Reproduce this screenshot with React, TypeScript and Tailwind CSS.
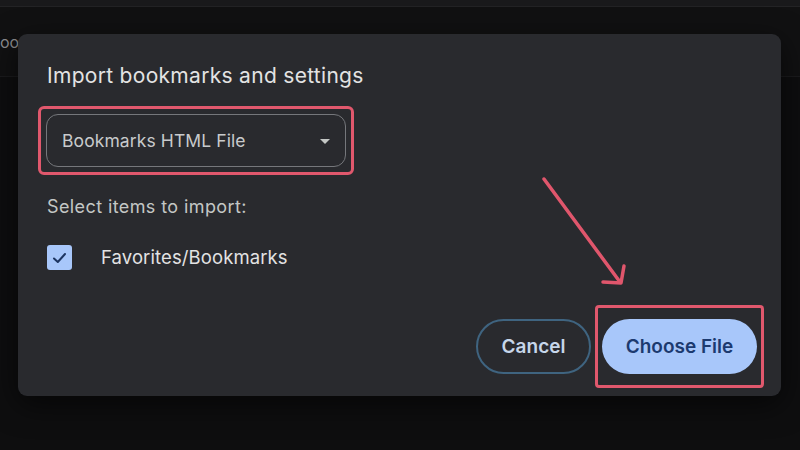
import React from "react";

export default function App() {
  return (
    <div
      className="relative w-[800px] h-[450px] overflow-hidden bg-[#0e0e0f]"
      style={{ fontFamily: "Inter, 'Liberation Sans', sans-serif" }}
    >
      {/* background page */}
      <div className="h-[7px] bg-[#19191b] border-b border-[#232325]" />
      <div className="h-[70px] bg-[#111112] border-b border-[#1b1b1d] flex items-center">
        <span className="ml-0 text-[16px] text-[#8d8d90]">oo</span>
      </div>

      {/* modal dialog */}
      <div className="absolute left-[18px] top-[34px] w-[763px] h-[362px] rounded-[9px] bg-[#292a2e] shadow-[0_8px_30px_rgba(0,0,0,0.6)] pl-[29px] pr-[17px] pt-[29px] flex flex-col">
        <h1 className="text-[21px] leading-[26px] text-[#e3e3e3] font-normal tracking-[0.3px]">
          Import bookmarks and settings
        </h1>

        <div className="mt-[17px] -ml-[9px] w-[316px] border-[3px] border-[#e0586d] rounded-[6px] p-[5px]">
          <div className="h-[53px] rounded-[12px] border border-[#75777b] flex items-center justify-between pl-[15px] pr-[15px] pt-[2px]">
            <span className="text-[17.5px] text-[#c8cacc] tracking-[0.1px]">Bookmarks HTML File</span>
            <svg width="10" height="6" viewBox="0 0 10 6">
              <path d="M0 0 L10 0 L5 5 Z" fill="#c4c7c5" />
            </svg>
          </div>
        </div>

        <div className="mt-[20px] text-[18px] leading-[24px] text-[#c4c7c5] tracking-[0.4px]">
          Select items to import:
        </div>

        <div className="mt-[25px] flex items-center">
          <div className="w-[25px] h-[25px] rounded-[3px] bg-[#a8c7fa] flex items-center justify-center">
            <svg width="15" height="12" viewBox="0 0 15 12">
              <path d="M2 6.5 L5.8 10 L13 2" fill="none" stroke="#1d3561" strokeWidth="2" strokeLinecap="round" strokeLinejoin="round" />
            </svg>
          </div>
          <span className="ml-[29px] text-[18.5px] text-[#e3e3e3] tracking-[0.1px]">Favorites/Bookmarks</span>
        </div>

        <div className="mt-auto mb-[8px] flex items-center justify-end">
          <button className="w-[115px] h-[55px] rounded-full border-2 border-[#3f6480] text-[19px] font-semibold text-[#c6d6ea] flex items-center justify-center pt-[2px]">
            Cancel
          </button>
          <div className="ml-[4px] border-[3px] border-[#e0586d] rounded-[4px] px-[4px] py-[11px]">
            <button className="w-[155px] h-[55px] rounded-full bg-[#a8c7fa] text-[19px] font-semibold text-[#1c3a6f] flex items-center justify-center pt-[2px]">
              Choose File
            </button>
          </div>
        </div>
      </div>

      {/* annotation arrow */}
      <svg className="absolute left-0 top-0" width="800" height="450" viewBox="0 0 800 450">
        <g stroke="#e0566c" strokeWidth="3.5" strokeLinecap="round" strokeLinejoin="round" fill="none">
          <path d="M544 179 L620 282" />
          <path d="M624 266 L621 283 L603 282" />
        </g>
      </svg>
    </div>
  );
}
